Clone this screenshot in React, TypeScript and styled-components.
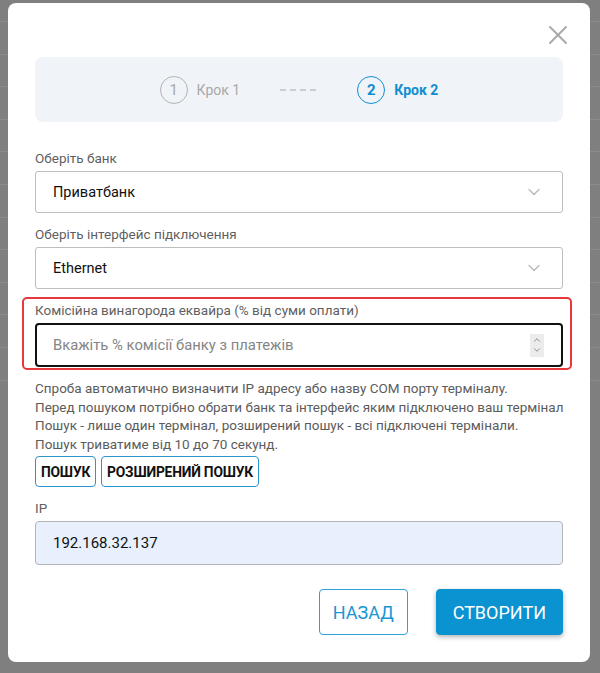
import React from 'react';
import styled, {createGlobalStyle} from 'styled-components';
import {ChevronDown, ChevronUp, X} from 'lucide-react';

const GlobalStyle = createGlobalStyle`
  html, body {
    margin: 0;
    padding: 0;
  }
  body {
    width: 600px;
    height: 673px;
    overflow: hidden;
    font-family: Roboto, "Noto Sans", "Liberation Sans", sans-serif;
    background-color: #7f7f7f;
    background-image: repeating-linear-gradient(
      to bottom,
      transparent 0,
      transparent 21px,
      #8b8b8b 21px,
      #8b8b8b 22px,
      transparent 22px,
      transparent 32.6px
    );
    background-size: 100% 384px;
    background-repeat: no-repeat;
  }
`;

const Backdrop = styled.div`
  display: flex;
  padding: 3px 0 0 8px;
`;

const Modal = styled.div`
  position: relative;
  box-sizing: border-box;
  width: 582px;
  height: 659px;
  background: #fff;
  border-radius: 8px;
  padding: 54px 27px 27px 27px;
  display: flex;
  flex-direction: column;
`;

const CloseButton = styled.button`
  position: absolute;
  top: 16px;
  right: 16px;
  width: 32px;
  height: 32px;
  padding: 0;
  border: 0;
  background: none;
  color: #a9a9a9;
  display: flex;
  cursor: pointer;
`;

const Stepper = styled.div`
  height: 65px;
  background: #f0f4f8;
  border-radius: 8px;
  display: flex;
  align-items: center;
  justify-content: center;
`;

const Step = styled.div<{$active?: boolean}>`
  display: flex;
  align-items: center;
  gap: 9px;
  color: ${p => (p.$active ? '#0f8fd2' : '#a8a8a8')};
  font-weight: ${p => (p.$active ? 700 : 400)};
  font-size: 14px;
`;

const StepCircle = styled.span<{$active?: boolean}>`
  box-sizing: border-box;
  width: 28px;
  height: 28px;
  border-radius: 50%;
  border: 1px solid ${p => (p.$active ? '#0f8fd2' : '#b3b3b3')};
  display: flex;
  align-items: center;
  justify-content: center;
  font-size: 15px;
`;

const StepDash = styled.span`
  width: 36px;
  height: 2px;
  margin: 0 41px 0 40px;
  background: repeating-linear-gradient(
    to right,
    #c6ced6 0,
    #c6ced6 6px,
    transparent 6px,
    transparent 10px
  );
`;

const Field = styled.div<{$top: number}>`
  display: flex;
  flex-direction: column;
  margin-top: ${p => p.$top}px;
`;

const Label = styled.label`
  font-size: 13.5px;
  line-height: 20px;
  color: #5f5f5f;
  margin-bottom: 3px;
`;

const Select = styled.div`
  box-sizing: border-box;
  height: 42px;
  border: 1px solid #bdbdbd;
  border-radius: 3px;
  padding: 0 18px 0 17px;
  display: flex;
  align-items: center;
  justify-content: space-between;
  font-size: 14.5px;
  color: #111;
`;

const Highlight = styled.div`
  margin: 8px -9px 0 -13px;
  padding: 1px 7px 1px 11px;
  border: 2px solid #e6383d;
  border-radius: 5px;
  display: flex;
  flex-direction: column;
`;

const Input = styled.div<{$focused?: boolean; $filled?: boolean}>`
  box-sizing: border-box;
  height: 44px;
  border: ${p => (p.$focused ? '2px solid #111' : '1px solid #b5b5b5')};
  border-radius: 4px;
  padding: 0 ${p => (p.$focused ? '17px' : '18px')} 0
    ${p => (p.$focused ? '16px' : '17px')};
  background: ${p => (p.$filled ? '#e8f0fe' : '#fff')};
  display: flex;
  align-items: center;
  justify-content: space-between;
  font-size: 15px;
  color: #111;
`;

const Placeholder = styled.span`
  font-size: 14.8px;
  color: #858585;
`;

const Spinner = styled.span`
  width: 14px;
  height: 23px;
  background: #ececec;
  color: #777;
  display: flex;
  flex-direction: column;
  align-items: center;
  justify-content: center;
`;

const Help = styled.p`
  margin: 9px 0 0 0;
  font-size: 13.5px;
  line-height: 18.5px;
  color: #5c5c5c;
  white-space: nowrap;
`;

const SearchRow = styled.div`
  display: flex;
  gap: 5px;
  margin-top: 3px;
`;

const SearchButton = styled.button`
  height: 31px;
  padding: 0 5px;
  border: 1px solid #2b95cf;
  border-radius: 4px;
  background: #fff;
  font-family: inherit;
  font-size: 13.8px;
  font-weight: 700;
  color: #111;
  letter-spacing: -0.2px;
`;

const Footer = styled.div`
  margin-top: auto;
  display: flex;
  justify-content: flex-end;
  gap: 28px;
`;

const ActionButton = styled.button<{$primary?: boolean}>`
  height: 46px;
  padding: 0 ${p => (p.$primary ? '16px' : '13px')};
  border-radius: 4px;
  font-family: inherit;
  font-size: 18px;
  font-weight: 400;
  border: 1px solid ${p => (p.$primary ? '#0b92d0' : '#2e9fd9')};
  background: ${p => (p.$primary ? '#0b92d0' : '#fff')};
  color: ${p => (p.$primary ? '#fff' : '#1896d4')};
  box-shadow: ${p => (p.$primary ? '0 2px 5px rgba(0, 0, 0, 0.3)' : 'none')};
`;

const HELP_LINES = [
  'Спроба автоматично визначити IP адресу або назву COM порту терміналу.',
  'Перед пошуком потрібно обрати банк та інтерфейс яким підключено ваш термінал',
  'Пошук - лише один термінал, розширений пошук - всі підключені термінали.',
  'Пошук триватиме від 10 до 70 секунд.'
];

const App = () => {
  return (
    <>
      <GlobalStyle />
      <Backdrop>
        <Modal>
          <CloseButton aria-label="close">
            <X size={32} strokeWidth={1.5} />
          </CloseButton>

          <Stepper>
            <Step>
              <StepCircle>1</StepCircle>
              Крок 1
            </Step>
            <StepDash />
            <Step $active>
              <StepCircle $active>2</StepCircle>
              Крок 2
            </Step>
          </Stepper>

          <Field $top={26}>
            <Label>Оберіть банк</Label>
            <Select>
              Приватбанк
              <ChevronDown size={20} strokeWidth={1.5} color="#b8b8b8" />
            </Select>
          </Field>

          <Field $top={11}>
            <Label>Оберіть інтерфейс підключення</Label>
            <Select>
              Ethernet
              <ChevronDown size={20} strokeWidth={1.5} color="#b8b8b8" />
            </Select>
          </Field>

          <Highlight>
            <Label>Комісійна винагорода еквайра (% від суми оплати)</Label>
            <Input $focused>
              <Placeholder>Вкажіть % комісії банку з платежів</Placeholder>
              <Spinner>
                <ChevronUp size={10} strokeWidth={2} />
                <ChevronDown size={10} strokeWidth={2} />
              </Spinner>
            </Input>
          </Highlight>

          <Help>
            {HELP_LINES.map(line => (
              <React.Fragment key={line}>
                {line}
                <br />
              </React.Fragment>
            ))}
          </Help>

          <SearchRow>
            <SearchButton>ПОШУК</SearchButton>
            <SearchButton>РОЗШИРЕНИЙ ПОШУК</SearchButton>
          </SearchRow>

          <Field $top={11}>
            <Label>IP</Label>
            <Input $filled>192.168.32.137</Input>
          </Field>

          <Footer>
            <ActionButton>НАЗАД</ActionButton>
            <ActionButton $primary>СТВОРИТИ</ActionButton>
          </Footer>
        </Modal>
      </Backdrop>
    </>
  );
};

export default App;
